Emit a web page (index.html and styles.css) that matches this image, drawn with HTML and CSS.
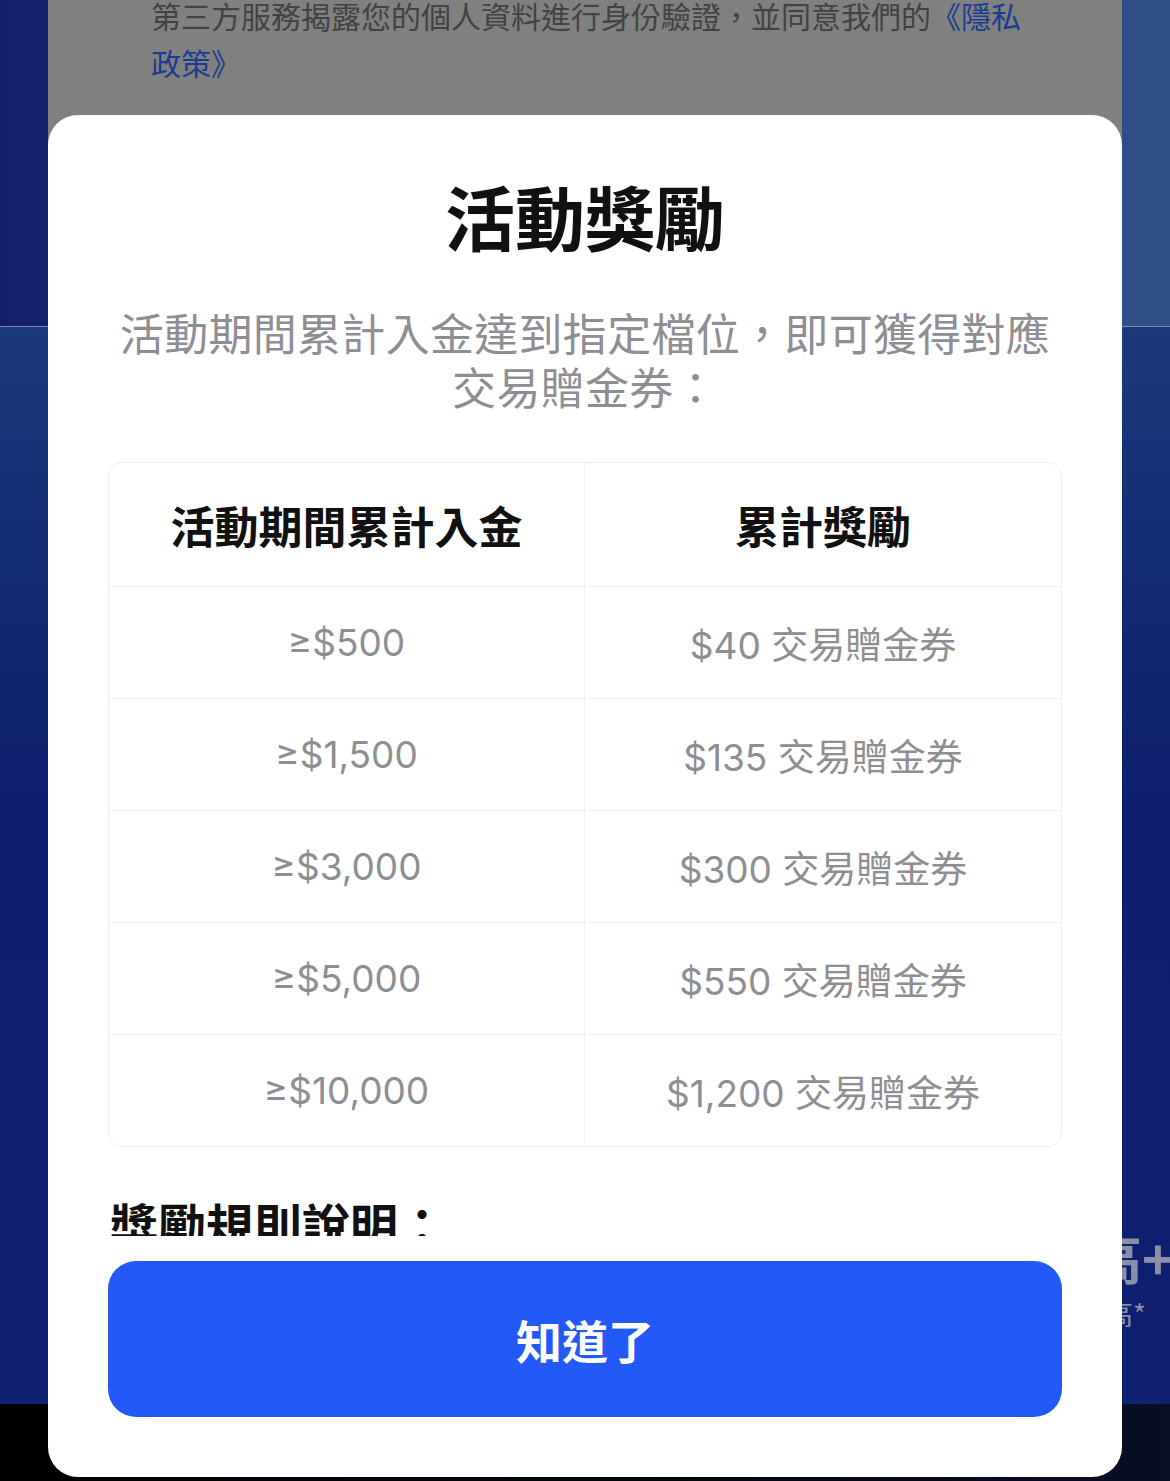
FILE: index.html
```html
<!DOCTYPE html>
<html lang="zh-Hant">
<head>
  <meta charset="UTF-8" />
  <meta name="viewport" content="width=device-width, initial-scale=1.0" />
  <title>活動獎勵</title>
  <link rel="stylesheet" href="styles.css">
</head>
<body>
  <div class="backdrop">
    <div class="banner">
      <div class="card">
        <p class="consent">第三方服務揭露您的個人資料進行身份驗證，並同意我們的<span class="link">《隱私政策》</span></p>
      </div>
    </div>
    <div class="hero">
      <div class="hero-big">最高+</div>
      <div class="hero-small">最高*</div>
    </div>
    <div class="tabbar"></div>
  </div>

  <div class="modal">
    <div class="modal-body">
      <h1 class="title">活動獎勵</h1>
      <p class="desc">活動期間累計入金達到指定檔位，即可獲得對應交易贈金券：</p>

      <div class="reward-table">
        <div class="cell head">活動期間累計入金</div>
        <div class="cell head">累計獎勵</div>

        <div class="cell">≥$500</div>
        <div class="cell">$40 交易贈金券</div>

        <div class="cell">≥$1,500</div>
        <div class="cell">$135 交易贈金券</div>

        <div class="cell">≥$3,000</div>
        <div class="cell">$300 交易贈金券</div>

        <div class="cell">≥$5,000</div>
        <div class="cell">$550 交易贈金券</div>

        <div class="cell last">≥$10,000</div>
        <div class="cell last">$1,200 交易贈金券</div>
      </div>

      <h2 class="rules-title">獎勵規則說明：</h2>
    </div>
    <div class="modal-foot">
      <button class="ok-btn">知道了</button>
    </div>
  </div>
</body>
</html>
```

FILE: styles.css
```css
body {
  margin: 0;
  width: 1170px;
  height: 1481px;
  overflow: hidden;
  position: relative;
  background: #000;
  font-family: "Noto Sans CJK TC", "Noto Sans", sans-serif;
}

/* page behind the dimmed overlay */
.backdrop {
  display: flex;
  flex-direction: column;
  height: 1481px;
}

.banner {
  height: 326px;
  padding: 0 48px;
  background: linear-gradient(90deg, #141f6c 0%, #1b3370 30%, #2a4a83 75%, #2d5087 100%);
  border-bottom: 1px solid #7d8aad;
}

.card {
  height: 100%;
  background: #808080;
  padding: 0 98px 0 103px;
  overflow: hidden;
}

.consent {
  margin: -8px 0 0;
  font-size: 30px;
  line-height: 47px;
  color: #434343;
}

.link {
  color: #1b3d91;
}

.hero {
  height: 1077px;
  background: linear-gradient(180deg, #1b3a7b 0%, #112a72 25%, #0c1e6c 45%, #0e2070 100%);
  padding-top: 900px;
  box-sizing: border-box;
  text-align: right;
}

.hero-big {
  font-size: 54px;
  font-weight: 700;
  line-height: 60px;
  color: #8b90a8;
  margin-right: -4px;
}

.hero-small {
  margin-top: 8px;
  font-size: 28px;
  line-height: 36px;
  color: #8b90a8;
  margin-right: 24px;
}

.tabbar {
  flex: 1;
  background: linear-gradient(90deg, #000 0%, #03060f 60%, #080f26 100%);
}

/* modal */
.modal {
  position: absolute;
  left: 48px;
  top: 115px;
  width: 1074px;
  height: 1362px;
  background: #fff;
  border-radius: 30px;
  display: flex;
  flex-direction: column;
  overflow: hidden;
}

.modal-body {
  height: 1121px;
  overflow: hidden;
  padding: 56px 60px 0;
}

.title {
  margin: 0;
  text-align: center;
  font-size: 70px;
  line-height: 90px;
  font-weight: 700;
  color: #111;
}

.desc {
  margin: 44px 0 0;
  text-align: center;
  font-size: 44px;
  line-height: 54px;
  letter-spacing: 0.3px;
  color: #8e8e93;
}

.reward-table {
  margin-top: 49px;
  display: grid;
  grid-template-columns: 1fr 1fr;
  border: 1px solid #efeff1;
  border-radius: 14px;
  overflow: hidden;
}

.cell {
  height: 111px;
  display: flex;
  align-items: center;
  justify-content: center;
  font-family: Inter, "Noto Sans CJK TC", sans-serif;
  font-size: 37px;
  color: #8e8e93;
  border-bottom: 1px solid #f0f0f2;
}

.cell:nth-child(odd) {
  border-right: 1px solid #efeff1;
}

.cell.head {
  height: 123px;
  font-family: "Noto Sans CJK TC", sans-serif;
  font-size: 44px;
  font-weight: 700;
  color: #111;
}

.cell.last {
  border-bottom: none;
}

.rules-title {
  margin: 44px 0 0 2px;
  font-size: 48px;
  line-height: 64px;
  font-weight: 700;
  color: #111;
}

.modal-foot {
  padding: 25px 60px 60px;
}

.ok-btn {
  display: block;
  width: 100%;
  height: 156px;
  border: none;
  border-radius: 28px;
  background: #2359f6;
  color: #fff;
  font-family: inherit;
  font-size: 46px;
  font-weight: 700;
  cursor: pointer;
}
```
